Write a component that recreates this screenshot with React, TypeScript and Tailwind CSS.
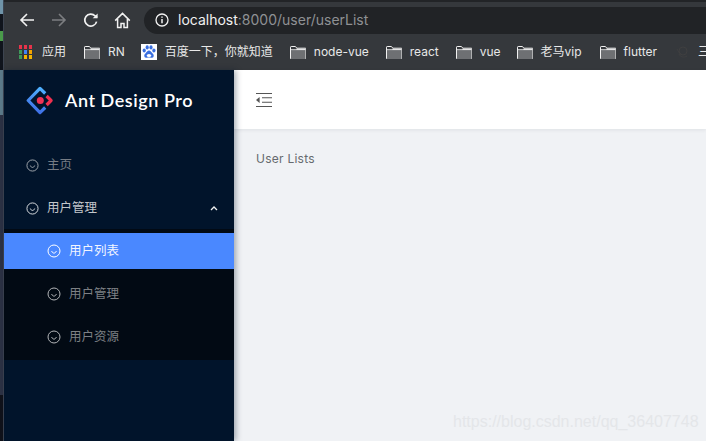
import React from "react";

const CJK = "font-['Inter','Noto_Sans_CJK_SC',sans-serif]";

function Smile({ className = "" }: { className?: string }) {
  return (
    <svg viewBox="0 0 14 14" className={className} fill="none" stroke="currentColor">
      <circle cx="7" cy="7" r="6" strokeWidth="1" />
      <path d="M4.8 7.4c.5 1.2 1.3 1.7 2.2 1.7s1.7-.5 2.2-1.7" strokeWidth="1" strokeLinecap="round" />
    </svg>
  );
}

function Folder() {
  return (
    <svg width="16" height="13" viewBox="0 0 16 13" className="shrink-0">
      <path d="M.5 12.5V1.2c0-.4.3-.7.7-.7h4.2l1.4 1.7h8.5c.4 0 .7.3.7.7v9.9c0 .4-.3.7-.7.7H1.2c-.4 0-.7-.3-.7-.7z" fill="#6e7073" stroke="#f1f1f1" strokeWidth="1" />
      <path d="M.5 3.6h15" stroke="#f1f1f1" strokeWidth="1" />
      <path d="M1 1h4.2l1.3 2.2H1z" fill="#35383c" />
    </svg>
  );
}

function AppsIcon() {
  const colors = ["#e8334a", "#e8334a", "#e8334a", "#3f9a5a", "#4285f4", "#f4a400", "#3f9a5a", "#f4b400", "#f4b400"];
  return (
    <div className="grid grid-cols-3 gap-[1.5px] w-[13px] shrink-0">
      {colors.map((c, i) => (
        <div key={i} className="w-[3.4px] h-[3.6px]" style={{ backgroundColor: c }} />
      ))}
    </div>
  );
}

function Paw() {
  return (
    <svg width="16" height="16" viewBox="0 0 16 16" className="shrink-0">
      <rect width="16" height="16" fill="#fff" />
      <g fill="#3a6fe0">
        <ellipse cx="3.2" cy="6.6" rx="1.6" ry="2" />
        <ellipse cx="6.2" cy="3.4" rx="1.6" ry="2.1" />
        <ellipse cx="10" cy="3.4" rx="1.6" ry="2.1" />
        <ellipse cx="12.9" cy="6.6" rx="1.6" ry="2" />
        <path d="M8 6.6c-1.6 0-2.2 1.6-3.4 2.6-1.2 1-1.6 2-1.2 3.2.4 1.2 1.6 1.6 2.6 1.4.9-.2 1.4-.2 2-.2s1.2 0 2 .2c1 .2 2.2-.2 2.6-1.4.4-1.2 0-2.2-1.2-3.2C10.2 8.2 9.6 6.6 8 6.6z" />
      </g>
      <ellipse cx="8" cy="11.4" rx="2.2" ry="1.5" fill="#fff" />
    </svg>
  );
}

function Bookmark({ label, icon, className = "" }: { label: string; icon: React.ReactNode; className?: string }) {
  return (
    <div className={"flex items-center shrink-0 " + className}>
      {icon}
      <span className="text-[12px] leading-none text-[#e8e8e8]">{label}</span>
    </div>
  );
}

function Logo() {
  return (
    <svg width="28" height="29" viewBox="0 0 28 29" className="shrink-0" fill="none">
      <defs>
        <linearGradient id="lg" x1="0.7" y1="0" x2="0.5" y2="1">
          <stop offset="0" stopColor="#4fb0ff" />
          <stop offset="1" stopColor="#3f6fe6" />
        </linearGradient>
      </defs>
      <path d="M19.2 7.5 14 2.4 2.2 14.5 14 26.6l5.2-5.1" stroke="url(#lg)" strokeWidth="3.2" strokeLinejoin="round" />
      <path d="M20.6 10l4.5 4.5-4.5 4.5" stroke="#f0304f" strokeWidth="3.2" strokeLinejoin="round" />
      <circle cx="14.3" cy="14.5" r="3.5" fill="#f03356" />
    </svg>
  );
}

function SubItem({ label, active }: { label: string; active?: boolean }) {
  return (
    <div className={"h-[36px] flex items-center pl-[43px] gap-[8px] " + (active ? "bg-[#4a88ff] text-[#f2f5ff]" : "text-[#7d8084]")}>
      <Smile className={"w-[14px] h-[14px] " + (active ? "text-white" : "text-[#b3b5b8]")} />
      <span className="text-[12.5px] leading-none">{label}</span>
    </div>
  );
}

export default function App() {
  return (
    <div className={"w-[706px] h-[441px] flex overflow-hidden bg-[#f0f2f5] " + CJK}>
      <div className="w-[4px] flex flex-col shrink-0 bg-[#10121a] border-r border-[#3d4450]">
        <div className="h-[14px] bg-[#6f93a8]" />
        <div className="h-[17px] bg-[#10141c]" />
        <div className="h-[10px] bg-[#4a9a4a]" />
        <div className="h-[29px] bg-[#10141c]" />
        <div className="h-[45px] bg-[#5d7b8a]" />
        <div className="h-[280px] bg-[#2c3244]" />
      </div>
      <div className="flex-1 flex flex-col min-w-0">
        <div className="h-[70px] shrink-0 flex flex-col bg-[#35383c]">
          <div className="h-[2px] bg-[#222427]" />
          <div className="h-[35px] flex items-center pt-[1px]">
            <div className="flex items-center w-[140px] shrink-0 pl-[15px]">
              <svg width="16" height="16" viewBox="0 0 16 16" fill="none" stroke="#f2f2f2" strokeWidth="1.6" className="mr-[16px]">
                <path d="M15 8H2M8 2 2 8l6 6" />
              </svg>
              <svg width="16" height="16" viewBox="0 0 16 16" fill="none" stroke="#7c7e81" strokeWidth="1.6" className="mr-[16px]">
                <path d="M1 8h13M8 2l6 6-6 6" />
              </svg>
              <svg width="16" height="16" viewBox="0 0 16 16" fill="none" stroke="#f2f2f2" strokeWidth="1.7" className="mr-[15px]">
                <path d="M13.6 9.6a6 6 0 1 1-1.4-5.6L14 5.5" />
                <path d="M14.6 1.4v4.9H9.7z" fill="#f2f2f2" stroke="none" />
              </svg>
              <svg width="17" height="17" viewBox="0 0 17 17" fill="none" stroke="#f2f2f2" strokeWidth="1.5">
                <path d="M1.2 8.6 8.5 1.4l7.3 7.2M3.6 7v8.6h3.4v-4h3v4h3.4V7" />
              </svg>
            </div>
            <div className="flex-1 h-[27px] rounded-l-[14px] bg-[#212326] flex items-center pl-[11px]">
              <svg width="14" height="14" viewBox="0 0 14 14" fill="none" stroke="#f2f2f2" className="mr-[9px]">
                <circle cx="7" cy="7" r="6" strokeWidth="1.3" />
                <path d="M7 6v4.2" strokeWidth="1.5" />
                <path d="M7 3.4v1.4" strokeWidth="1.5" />
              </svg>
              <span className="text-[14px] leading-none text-[#8f9194]">
                <span className="text-[#f1f1f1]">localhost</span>:8000/user/userList
              </span>
            </div>
          </div>
          <div className="flex-1 flex items-center pl-[15px] pb-[3px]">
            <Bookmark label="应用" icon={<AppsIcon />} className="gap-[10px] mr-[18px]" />
            <Bookmark label="RN" icon={<Folder />} className="gap-[8px] mr-[16px]" />
            <Bookmark label="百度一下，你就知道" icon={<Paw />} className="gap-[8px] mr-[17px]" />
            <Bookmark label="node-vue" icon={<Folder />} className="gap-[8px] mr-[17px]" />
            <Bookmark label="react" icon={<Folder />} className="gap-[8px] mr-[17px]" />
            <Bookmark label="vue" icon={<Folder />} className="gap-[8px] mr-[16px]" />
            <Bookmark label="老马vip" icon={<Folder />} className="gap-[8px] mr-[18px]" />
            <Bookmark label="flutter" icon={<Folder />} className="gap-[8px] mr-[18px]" />
            <svg width="14" height="14" viewBox="0 0 14 14" fill="none" stroke="#3f3f40" strokeWidth="1" className="shrink-0 mr-[9px]">
              <circle cx="8" cy="6" r="4" />
              <path d="M4 9c1 3 5 4 8 2M2 4c1 2 2 4 4 5" />
            </svg>
            <span className="text-[12px] leading-none text-[#e8e8e8]">三</span>
          </div>
        </div>
        <div className="flex-1 flex min-h-0">
          <aside className="w-[230px] shrink-0 bg-[#01142b] flex flex-col shadow-[2px_0_6px_rgba(0,21,41,0.35)] z-10">
            <div className="h-[60px] flex items-center pl-[22px] gap-[11px]">
              <Logo />
              <span className="text-[18px] leading-none font-semibold tracking-[0.55px] text-white font-['Lato',sans-serif]">Ant Design Pro</span>
            </div>
            <div className="mt-[17px] h-[36px] flex items-center pl-[22px] gap-[8px] text-[#767c84]">
              <Smile className="w-[13px] h-[13px] text-[#a9adb2]" />
              <span className="text-[12.5px] leading-none">主页</span>
            </div>
            <div className="mt-[7px] h-[36px] flex items-center pl-[22px] pr-[16px] gap-[8px] text-[#c3c7cb]">
              <Smile className="w-[13px] h-[13px] text-[#e6e8ea]" />
              <span className="text-[12.5px] leading-none">用户管理</span>
              <svg width="8" height="5" viewBox="0 0 8 5" fill="none" stroke="#f0f0f0" strokeWidth="1.3" className="ml-auto">
                <path d="M1 4l3-3 3 3" />
              </svg>
            </div>
            <div className="mt-[3px] pt-[4px] pb-[5px] bg-[#020a14] flex flex-col gap-[7px]">
              <SubItem label="用户列表" active />
              <SubItem label="用户管理" />
              <SubItem label="用户资源" />
            </div>
          </aside>
          <main className="flex-1 min-w-0 flex flex-col relative">
            <header className="h-[59px] shrink-0 bg-white flex items-center pl-[22px] shadow-[0_1px_4px_rgba(0,21,41,0.08)]">
              <svg width="16" height="14" viewBox="0 0 16 14" fill="none" stroke="#555" strokeWidth="1.1">
                <path d="M0 .5h16M6 4.8h10M6 9.2h10M0 13.5h16" />
                <path d="M3.6 4v6L0 7z" fill="#555" stroke="none" />
              </svg>
            </header>
            <p className="pl-[22px] pt-[23px] text-[12px] leading-[14px] tracking-[0.25px] text-[#666a6e]">User Lists</p>
            <span className="absolute left-[219px] top-[344px] text-[16px] leading-none text-[#e4e6e9] font-['Liberation_Sans',sans-serif]">
              https://blog.csdn.net/qq_36407748
            </span>
          </main>
        </div>
      </div>
    </div>
  );
}
